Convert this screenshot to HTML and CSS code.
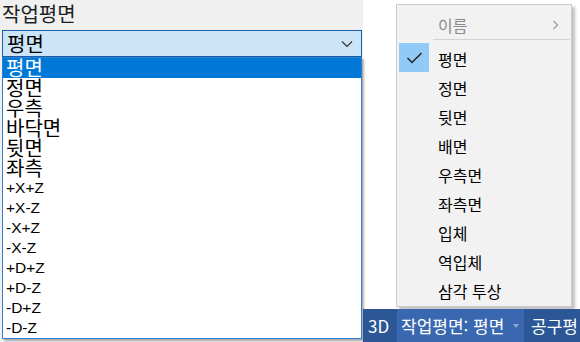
FILE: index.html
```html
<!DOCTYPE html>
<html lang="ko">
<head>
    <meta charset="UTF-8">
    <meta name="viewport" content="width=device-width, initial-scale=1.0">
    <title>작업평면</title>
    <link rel="stylesheet" href="styles.css">
</head>
<body>
    <div class="panel">
        <div class="label">작업평면</div>

        <div class="combo">
            <span>평면</span>
            <svg class="chevron" width="12" height="8" viewBox="0 0 12 8">
                <polyline points="1,1.5 6,6.5 11,1.5" fill="none" stroke="#333" stroke-width="1.2"/>
            </svg>
        </div>

        <ul class="list">
            <li class="selected">평면</li>
            <li>정면</li>
            <li>우측</li>
            <li>바닥면</li>
            <li>뒷면</li>
            <li>좌측</li>
            <li class="latin">+X+Z</li>
            <li class="latin">+X-Z</li>
            <li class="latin">-X+Z</li>
            <li class="latin">-X-Z</li>
            <li class="latin">+D+Z</li>
            <li class="latin">+D-Z</li>
            <li class="latin">-D+Z</li>
            <li class="latin">-D-Z</li>
        </ul>
    </div>

    <div class="side">
        <div class="canvas">
            <div class="menu">
                <div class="menu-item disabled">
                    <span class="gutter"></span>
                    <span class="text">이름</span>
                    <svg class="submenu" width="7" height="10" viewBox="0 0 7 10">
                        <polyline points="1.5,1 5.5,5 1.5,9" fill="none" stroke="#999" stroke-width="1.1"/>
                    </svg>
                </div>
                <div class="separator"></div>
                <div class="menu-item">
                    <span class="gutter">
                        <span class="check">
                            <svg width="30" height="29" viewBox="0 0 30 29">
                                <polyline points="8.5,15 13,19.5 22.5,10" fill="none" stroke="#222" stroke-width="1.5"/>
                            </svg>
                        </span>
                    </span>
                    <span class="text">평면</span>
                </div>
                <div class="menu-item"><span class="gutter"></span><span class="text">정면</span></div>
                <div class="menu-item"><span class="gutter"></span><span class="text">뒷면</span></div>
                <div class="menu-item"><span class="gutter"></span><span class="text">배면</span></div>
                <div class="menu-item"><span class="gutter"></span><span class="text">우측면</span></div>
                <div class="menu-item"><span class="gutter"></span><span class="text">좌측면</span></div>
                <div class="menu-item"><span class="gutter"></span><span class="text">입체</span></div>
                <div class="menu-item"><span class="gutter"></span><span class="text">역입체</span></div>
                <div class="menu-item"><span class="gutter"></span><span class="text">삼각 투상</span></div>
            </div>
        </div>

        <div class="statusbar">
            <span class="mode">3D</span>
            <span class="plane">
                작업평면: 평면
                <span class="arrow"></span>
            </span>
            <span class="tool">공구평</span>
        </div>
    </div>
</body>
</html>
```

FILE: styles.css
```css
body{
    margin: 0;
    width: 580px;
    height: 342px;
    overflow: hidden;
    display: flex;
    background-color: #ffffff;
    font-family: "Noto Sans CJK KR", "Noto Sans", sans-serif;
}

.panel{
    width: 363px;
    height: 342px;
    flex-shrink: 0;
    background-color: #f0f0f0;
}

.label{
    height: 30px;
    line-height: 27px;
    padding-left: 2px;
    font-size: 20px;
    color: #1e1e1e;
}

.combo{
    box-sizing: border-box;
    width: 360px;
    height: 27px;
    margin-left: 2px;
    padding: 0 8px 0 4px;
    display: flex;
    align-items: center;
    justify-content: space-between;
    border: 1px solid #1a5ea9;
    background-color: #cce4f7;
    font-size: 20px;
    line-height: 25px;
    color: #000;
}

.list{
    box-sizing: border-box;
    width: 360px;
    margin: 0 0 0 2px;
    padding: 0;
    list-style-type: none;
    border: 1px solid #2f7fd0;
    background-color: #ffffff;
    box-shadow: 2px 2px 2px rgba(0, 0, 0, 0.3);
}

.list li{
    height: 20px;
    line-height: 20px;
    padding-left: 3px;
    font-size: 20px;
    color: #000;
}

.list li.selected{
    background-color: #0078d7;
    color: #ffffff;
}

.list li.latin{
    font-family: "Liberation Sans", Arial, sans-serif;
    font-size: 15.5px;
    padding-left: 3px;
}

.side{
    flex: 1;
    display: flex;
    flex-direction: column;
}

.canvas{
    flex: 1;
    padding: 4px 0 0 33px;
}

.menu{
    box-sizing: border-box;
    width: 176px;
    padding: 5px 0 1px;
    border: 1px solid #cccccc;
    background-color: #f2f2f2;
    box-shadow: 3px 3px 3px rgba(0, 0, 0, 0.25);
}

.menu-item{
    height: 29px;
    display: flex;
    align-items: center;
    font-size: 16px;
    color: #000;
}

.menu-item.disabled{
    color: #8c8c8c;
}

.gutter{
    width: 36px;
    height: 29px;
    flex-shrink: 0;
}

.check{
    display: block;
    width: 30px;
    height: 29px;
    margin: -1px 0 0 2px;
    background-color: #91c9f7;
}

.check svg{
    display: block;
}

.text{
    padding-left: 5px;
    flex: 1;
}

.submenu{
    margin-right: 12px;
}

.separator{
    height: 1px;
    margin: 0 1px 4px 36px;
    background-color: #d4d4d4;
}

.statusbar{
    height: 33px;
    display: flex;
    align-items: stretch;
    background-color: #2b5797;
    color: #ffffff;
    font-size: 17px;
    white-space: nowrap;
    overflow: hidden;
}

.mode{
    width: 29px;
    padding-left: 5px;
    display: flex;
    align-items: center;
}

.plane{
    width: 123px;
    padding-left: 4px;
    display: flex;
    align-items: center;
    background-color: #3a68b0;
}

.arrow{
    margin-left: auto;
    margin-right: 5px;
    border-left: 3px solid transparent;
    border-right: 3px solid transparent;
    border-top: 4px solid #8ea4cc;
}

.tool{
    padding-left: 7px;
    display: flex;
    align-items: center;
}
```
